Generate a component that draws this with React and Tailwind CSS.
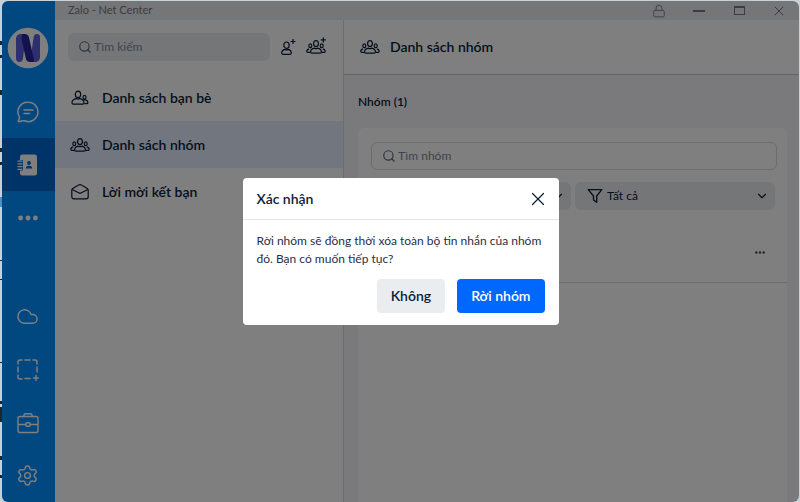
import { Search, ChevronDown, X, Lock, Cloud, Settings } from "lucide-react"

function FriendsIcon() {
  return (
    <svg className="w-5 h-5" viewBox="0 0 20 20" fill="none" stroke="currentColor" strokeWidth="1.2" strokeLinejoin="round" aria-hidden="true">
      <ellipse cx="8" cy="6.4" rx="2.7" ry="3.2" />
      <path d="M6.4 10.6C4 11 2 12.4 2 14.9c0 .8.5 1.2 1.3 1.2h9.4c.8 0 1.3-.4 1.3-1.2 0-2.500-2-3.900-4.400-4.300-1 .6-2.200.6-3.200 0Z" />
      <ellipse cx="14.500" cy="9.200" rx="1.500" ry="1.900" />
      <path d="M14.400 15.700h2.500c.7 0 1-.4 1-.9 0-1.500-.9-2.400-2.200-2.900h-2.500" />
    </svg>
  )
}

function GroupIcon({ plus = false, className = "w-5 h-5" }) {
  return (
    <svg className={className} viewBox="0 0 20 20" fill="none" stroke="currentColor" strokeWidth="1.2" strokeLinejoin="round" aria-hidden="true">
      <ellipse cx="10" cy="6.6" rx="2.4" ry="3" />
      <path d="M8.4 11.2C6 11.7 4.6 13 4.6 14.9c0 .8.4 1.2 1.2 1.2h8.4c.8 0 1.2-.4 1.2-1.2 0-1.9-1.4-3.2-3.8-3.7-.9.5-2.3.5-3.2 0Z" />
      <ellipse cx="4.3" cy="8.8" rx="1.5" ry="1.9" />
      <ellipse cx="15.7" cy="8.8" rx="1.5" ry="1.9" />
      <path d="M3.2 11.8C1.5 12.2.8 13.2.8 14.3c0 .7.3 1 1 1h2.6M16.8 11.8c1.7.4 2.4 1.4 2.4 2.5 0 .7-.3 1-1 1h-2.6" />
      {plus && <path d="M17.3.4v5M14.8 2.9h5" />}
    </svg>
  )
}

function AddFriendIcon() {
  return (
    <svg className="w-5 h-5" viewBox="0 0 20 20" fill="none" stroke="currentColor" strokeWidth="1.2" strokeLinejoin="round" aria-hidden="true">
      <ellipse cx="8.5" cy="8.2" rx="2.7" ry="3.2" />
      <path d="M6.9 12.4C4.9 12.900 3.700 14.200 3.700 16.100c0 .8.500 1.200 1.200 1.200h7.200c.7 0 1.200-.4 1.200-1.200 0-1.900-1.200-3.200-3.200-3.700-1.100.6-2.100.6-3.200 0Z" />
      <path d="M15 2v5M12.500 4.500h5" />
    </svg>
  )
}

function InviteIcon() {
  return (
    <svg className="w-5 h-5" viewBox="0 0 20 20" fill="none" stroke="currentColor" strokeWidth="1.2" strokeLinejoin="round" aria-hidden="true">
      <path d="M1.8 8.2c0-.8.4-1.4 1-1.8l5.7-3.3c.9-.6 2.1-.6 3 0l5.7 3.3c.6.4 1 1 1 1.8v6.6c0 1.1-.9 2-2 2H3.8c-1.1 0-2-.9-2-2Z" />
      <path d="M2.2 7.5 9.1 11c.6.3 1.2.3 1.8 0l6.9-3.5" />
    </svg>
  )
}

function ChatIcon() {
  return (
    <svg width="22" height="22" viewBox="0 0 22 22" fill="none" stroke="currentColor" strokeWidth="1.5" strokeLinecap="round" strokeLinejoin="round" aria-hidden="true">
      <path d="M11.3 1.2A9.7 9.7 0 1 1 7.4 19.8c-.5-.2-.9-.1-1.4 0l-4 .9c-.5.1-.8-.3-.6-.8l1-2.6c.2-.5.1-.9-.1-1.4A9.7 9.7 0 0 1 11.3 1.2Z" />
      <path d="M7 9h9M7 12.6h5.5" />
    </svg>
  )
}

function ContactsIcon() {
  return (
    <svg width="22" height="22" viewBox="0 0 22 22" aria-hidden="true">
      <rect x="3" y="0.5" width="17" height="21" rx="2.5" fill="currentColor" />
      <path d="M2 7.2h4M2 9.9h4M2 12.6h4M2 15.3h4" stroke="#0068d1" strokeWidth="2.6" />
      <path d="M.5 7.2h5M.5 9.9h5M.5 12.6h5M.5 15.3h5" stroke="currentColor" strokeWidth="1.2" />
      <circle cx="12" cy="9" r="1.9" fill="#0068d1" />
      <path d="M8.8 14.6c0-2.2 1.3-2.9 3.2-2.9s3.2.7 3.2 2.9Z" fill="#0068d1" />
    </svg>
  )
}

function CaptureIcon() {
  return (
    <svg width="22" height="22" viewBox="0 0 22 22" fill="none" stroke="currentColor" strokeWidth="1.5" strokeLinecap="round" aria-hidden="true">
      <path d="M1 5V3c0-1.1.9-2 2-2h2M8 1h5M16 1h2c1.1 0 2 .9 2 2v2M20 8v5M1 8v5M1 16v2c0 1.1.9 2 2 2h2M8 19.5h5M19 16.5v5M16.5 19h5" />
    </svg>
  )
}

function BriefcaseIcon() {
  return (
    <svg width="22" height="22" viewBox="0 0 22 22" fill="none" stroke="currentColor" strokeWidth="1.4" aria-hidden="true">
      <rect x="1" y="4.5" width="20" height="16" rx="2" />
      <path d="M7 4.5V3c0-.7.4-1.2 1.2-1.2h5.6c.8 0 1.2.5 1.2 1.2v1.5M1 12.5h8M13 12.5h8" />
      <rect x="9" y="10.7" width="4" height="3.6" rx=".8" />
    </svg>
  )
}

function FunnelIcon() {
  return (
    <svg width="16" height="16" viewBox="0 0 16 16" fill="none" stroke="currentColor" strokeWidth="1.3" strokeLinejoin="round" aria-hidden="true">
      <path d="M1.2 1.7h13.6L9.7 8v6.3L6.5 12V8Z" />
    </svg>
  )
}

function Dots({ className }) {
  return (
    <svg className={className} viewBox="0 0 20 6" fill="currentColor" aria-hidden="true">
      <circle cx="2.6" cy="3" r="2.4" />
      <circle cx="10" cy="3" r="2.4" />
      <circle cx="17.4" cy="3" r="2.4" />
    </svg>
  )
}

function Avatar() {
  return (
    <svg className="mr-0.5" width="42" height="42" viewBox="0 0 42 42" role="img" aria-label="Net Center">
      <circle cx="21" cy="21" r="20.3" fill="#fff" />
      <path d="M9 12c0-3 2-5 5-5H19l-3 24c-.3 2.500-1.300 4-3.500 4S9 33.700 9 31.500Z" fill="#5d5fe0" />
      <path d="M26.500 11c.3-2.500 1.300-4 3.500-4s3 1.300 3 3.500V30c0 3-2 5-5 5h-5Z" fill="#5d5fe0" />
      <path d="M15 7h2.500c2.700 0 4 1.200 4.500 3.500L27 33l-.5 2H23c-2.500 0-3.600-1.200-4.200-3.500L14.500 12Z" fill="#28249c" />
    </svg>
  )
}

// what shows of the desktop behind the window, along its left edge
function Backdrop() {
  return (
    <svg className="absolute left-0 top-0" width="2" height="502" viewBox="0 0 2 502" aria-hidden="true">
      <path d="M1 41v4M1 55v3M1 90v5M1 148v4M1 162v3M1 260v1M1 279v1M1 362v1M1 401v3M1 407v15M1 456v4M1 475v3" stroke="#1c2733" strokeWidth="2" />
      <path d="M1 197v10" stroke="#4a8fc4" strokeWidth="2" />
    </svg>
  )
}

const RailButton = ({ label, active, children }) => (
  <button
    aria-label={label}
    className={`w-full h-[53px] shrink-0 flex items-center justify-center pr-0.5 text-white ${active ? "bg-[#0068d1]" : ""}`}
  >
    {children}
  </button>
)

const NavItem = ({ label, icon, active }) => (
  <a href="#" className={`h-[47px] flex items-center gap-3 pl-[15px] text-sm font-semibold ${active ? "bg-[#e5efff]" : ""}`}>
    {icon}
    {label}
  </a>
)

const WindowButton = ({ label, children }) => (
  <button aria-label={label} className="w-4 flex justify-center">{children}</button>
)

export default function App() {
  return (
    <div className="relative min-h-screen flex pl-0.5 pt-px pr-px bg-[#c8d2d6] font-['Lato','Noto_Sans',sans-serif] text-[#081c36]">
      <Backdrop />
      <div className="relative flex-1 flex rounded-md overflow-hidden bg-white">
        <nav className="w-[53px] shrink-0 flex flex-col items-center bg-[#0091ff] pt-[26px]">
          <Avatar />
          <div className="w-full pt-4 flex flex-col">
            <RailButton label="Tin nhắn"><ChatIcon /></RailButton>
            <RailButton label="Danh bạ" active><ContactsIcon /></RailButton>
            <RailButton label="Thêm"><Dots className="w-5 h-1.5" /></RailButton>
          </div>
          <div className="w-full mt-auto flex flex-col">
            <RailButton label="Cloud của tôi"><Cloud size={23} strokeWidth={1.5} /></RailButton>
            <RailButton label="Chụp màn hình"><CaptureIcon /></RailButton>
            <RailButton label="Công cụ"><BriefcaseIcon /></RailButton>
            <RailButton label="Cài đặt"><Settings size={23} strokeWidth={1.5} /></RailButton>
          </div>
        </nav>

        <div className="flex-1 min-w-0 flex flex-col">
          <header className="h-[19px] shrink-0 flex items-center justify-between bg-[#e9ecef] pl-[13px] pr-3 text-[#747b84]">
            <span className="text-[11px]">Zalo - Net Center</span>
            <div className="flex items-center gap-6">
              <WindowButton label="Khóa"><Lock size={14} strokeWidth={1.5} /></WindowButton>
              <WindowButton label="Thu nhỏ"><span className="w-3 h-0.5 bg-[#747b84]" /></WindowButton>
              <WindowButton label="Phóng to"><span className="w-[11px] h-[9px] border border-t-2 border-[#747b84]" /></WindowButton>
              <WindowButton label="Đóng"><X size={16} strokeWidth={1.5} /></WindowButton>
            </div>
          </header>

          <div className="flex-1 flex">
            <aside className="w-[289px] shrink-0 border-r border-[#d6dbe1]">
              <div className="h-[54px] flex items-center gap-2 pl-[13px]">
                <label className="w-[202px] h-7 flex items-center gap-0.5 rounded-md bg-[#eaedf0] px-2.5 text-[#5a6981]">
                  <Search size={14} strokeWidth={2} className="shrink-0" />
                  <input type="text" aria-label="Tìm kiếm" placeholder="Tìm kiếm" className="w-full min-w-0 text-xs outline-none placeholder:text-[#7589a3]" />
                </label>
                <button aria-label="Thêm bạn"><AddFriendIcon /></button>
                <button aria-label="Tạo nhóm"><GroupIcon plus /></button>
              </div>
              <NavItem label="Danh sách bạn bè" icon={<FriendsIcon />} />
              <NavItem label="Danh sách nhóm" icon={<GroupIcon />} active />
              <NavItem label="Lời mời kết bạn" icon={<InviteIcon />} />
            </aside>

            <main className="flex-1 min-w-0 flex flex-col bg-[#f4f5f9]">
              <div className="h-[55px] shrink-0 flex items-center gap-2.5 pl-4 bg-white border-b border-[#c4cad2]">
                <GroupIcon />
                <h1 className="text-sm font-semibold">Danh sách nhóm</h1>
              </div>
              <div className="flex-1 flex flex-col pl-3.5 pr-3">
                <h2 className="h-[53px] flex items-center text-xs font-semibold">Nhóm (1)</h2>
                <section className="flex-1 bg-white rounded-t-md">
                  <div className="pl-[13px] pr-2.5 pt-3.5">
                    <label className="h-7 flex items-center gap-0.5 rounded-md border border-[#d6dbe1] px-2.5 text-[#5a6981]">
                      <Search size={14} strokeWidth={2} className="shrink-0" />
                      <input type="text" aria-label="Tìm nhóm" placeholder="Tìm nhóm" className="w-full min-w-0 text-xs outline-none placeholder:text-[#7589a3]" />
                    </label>
                    <div className="flex gap-1 pt-3 pr-0.5">
                      <div className="flex-1 h-7 flex items-center gap-1 rounded-md bg-[#eaedf0] pl-3 pr-1.5">
                        <select aria-label="Sắp xếp" className="flex-1 text-xs appearance-none" />
                        <ChevronDown size={14} strokeWidth={2} />
                      </div>
                      <div className="flex-1 h-7 flex items-center gap-1 rounded-md bg-[#eaedf0] pl-3 pr-1.5">
                        <FunnelIcon />
                        <select aria-label="Lọc nhóm" className="flex-1 text-xs appearance-none"><option>Tất cả</option></select>
                        <ChevronDown size={14} strokeWidth={2} />
                      </div>
                    </div>
                  </div>
                  <div className="h-[61px] mt-3 flex items-center justify-end pr-[21px] border-b border-[#d6dbe1]">
                    <button aria-label="Tùy chọn nhóm" className="text-[#3c4a63]"><Dots className="w-3 h-[3px]" /></button>
                  </div>
                </section>
              </div>
            </main>
          </div>
        </div>

        <div className="absolute inset-0 bg-black/50 flex items-center justify-center">
          <div role="dialog" aria-modal="true" aria-labelledby="confirm-title" className="w-[316px] rounded-sm bg-white">
            <div className="h-[42px] flex items-center justify-between pl-3.5 pr-2.5 border-b border-[#e3e6ea]">
              <h2 id="confirm-title" className="text-sm font-semibold">Xác nhận</h2>
              <button aria-label="Đóng hộp thoại"><X size={22} strokeWidth={1.3} /></button>
            </div>
            <div className="px-3.5 py-3">
              <p className="text-xs leading-[18px] text-[#1f304a]">Rời nhóm sẽ đồng thời xóa toàn bộ tin nhắn của nhóm đó. Bạn có muốn tiếp tục?</p>
              <div className="flex justify-end gap-3 pt-[11px]">
                <button className="h-[34px] px-3.5 rounded-sm bg-[#eaedf0] text-sm font-semibold">Không</button>
                <button className="h-[34px] px-3.5 rounded-sm bg-[#0068ff] text-white text-sm font-semibold">Rời nhóm</button>
              </div>
            </div>
          </div>
        </div>
      </div>
    </div>
  )
}
